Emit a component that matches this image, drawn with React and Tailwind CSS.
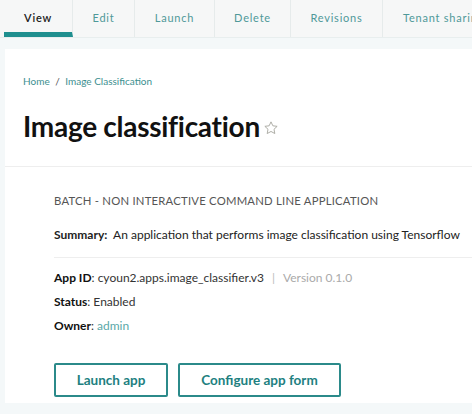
const tabs = [
  { label: 'View', w: 'w-[69px]', active: true },
  { label: 'Edit', w: 'w-[62px]' },
  { label: 'Launch', w: 'w-[80px]' },
  { label: 'Delete', w: 'w-[76px]' },
  { label: 'Revisions', w: 'w-[92px]' },
  { label: 'Tenant sharing', w: 'w-[130px]' },
];

function Star() {
  return (
    <svg width="16" height="16" viewBox="0 0 24 24" fill="none" stroke="#a8a8a0" strokeWidth="1.4" strokeLinejoin="round">
      <path d="M12 2.8l2.8 5.9 6.4.8-4.7 4.4 1.2 6.4L12 17.2l-5.7 3.1 1.2-6.4-4.7-4.4 6.4-.8z" />
    </svg>
  );
}

export default function App() {
  return (
    <div className="w-[472px] h-[414px] overflow-hidden bg-[#f4f8f9] font-['Lato',sans-serif]">
      {/* tab bar */}
      <div className="flex h-[38px] bg-[#f6f7f7] border-b border-[#e8eeee] pl-[4px] overflow-hidden whitespace-nowrap">
        {tabs.map((t) => (
          <div
            key={t.label}
            className={`${t.w} shrink-0 flex items-center text-[11px] tracking-[0.07em] border-r border-[#e6ebeb] ${
              t.label === 'Tenant sharing' ? 'justify-start pl-[20px]' : 'justify-center'
            } ${
              t.active
                ? 'text-[#222] font-semibold border-b-[5px] border-b-[#1f8f8f] pt-[5px]'
                : 'text-[#4f9999]'
            }`}
          >
            {t.label}
          </div>
        ))}
      </div>

      {/* content panel */}
      <div className="ml-[5px] mt-[11px] h-[354px] bg-white">
        <div className="px-[18px] pt-[25px] pb-[23px] border-b border-[#eeeeee]">
          <div className="text-[10px] text-[#3c8f8f]">
            Home <span className="text-[#555] mx-[3px]">/</span> Image Classification
          </div>
          <div className="flex items-end mt-[20px]">
            <h1 className="text-[28px] font-bold text-[#111] leading-[34px] tracking-[-0.01em]">Image classification</h1>
            <span className="ml-[3px] mb-[7px]"><Star /></span>
          </div>
        </div>

        <div className="pl-[49px] pt-[27px]">
          <div className="text-[11.3px] text-[#555] tracking-[0.02em] leading-[14px]">
            BATCH - NON INTERACTIVE COMMAND LINE APPLICATION
          </div>
          <div className="mt-[20px] text-[12px] text-[#222] leading-[14px]">
            <span className="font-bold">Summary:</span>&nbsp; An application that performs image classification using Tensorflow
          </div>
          <div className="mt-[15px] border-t border-[#eeeeee] pt-[13px] text-[12px] text-[#333] leading-[14px] flex flex-col gap-[10px]">
            <div>
              <span className="font-bold text-[#111]">App ID</span>: cyoun2.apps.image_classifier.v3
              <span className="text-[#bbb] mx-[8px]">|</span>
              <span className="text-[#aaa]">Version 0.1.0</span>
            </div>
            <div>
              <span className="font-bold text-[#111]">Status</span>: Enabled
            </div>
            <div>
              <span className="font-bold text-[#111]">Owner</span>: <span className="text-[#5aa8a8]">admin</span>
            </div>
          </div>
          <div className="flex gap-[10px] mt-[30px]">
            <button className="w-[114px] h-[34px] border-2 border-[#2b8a8a] rounded-[2px] text-[13.5px] font-bold text-[#217f7f]">
              Launch app
            </button>
            <button className="w-[163px] h-[34px] border-2 border-[#2b8a8a] rounded-[2px] text-[13.5px] font-bold text-[#217f7f]">
              Configure app form
            </button>
          </div>
        </div>
      </div>
    </div>
  );
}
